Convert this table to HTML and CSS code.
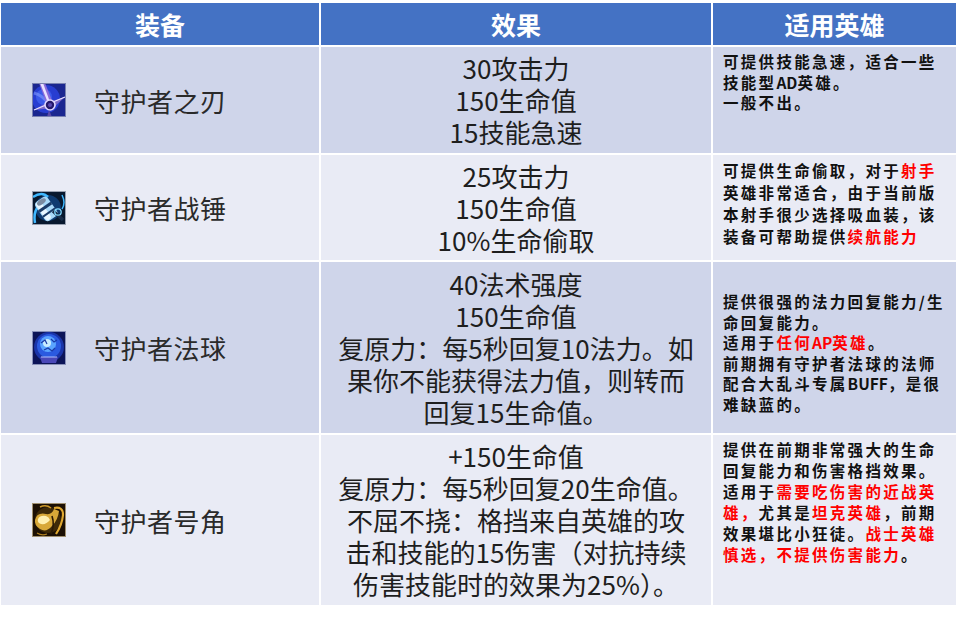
FILE: index.html
```html
<!DOCTYPE html>
<html lang="zh-CN">
<head>
<meta charset="utf-8">
<title>守护者装备</title>
<link rel="stylesheet" href="styles.css">
</head>
<body>
<div class="wrap">
  <div class="table">
    <div class="hd">装备</div>
    <div class="hd">效果</div>
    <div class="hd">适用英雄</div>

    <div class="cell item odd">
      <svg class="icon" viewBox="0 0 34 34">
        <rect width="34" height="34" fill="#1a2690"/>
        <circle cx="14" cy="16" r="14" fill="#2a40d8" opacity="0.9"/>
        <circle cx="12" cy="14" r="8" fill="#4060f0" opacity="0.8"/>
        <path d="M2 10 Q10 12 16 20" stroke="#90a8ff" stroke-width="3" fill="none" opacity="0.5"/>
        <path d="M7 0 L13 0 L21 20 L15 22 Z" fill="#8a6ad8"/>
        <path d="M8 0 L11 0 L18 19 L16 20 Z" fill="#e8e0ff"/>
        <path d="M2 27 L14 20 L33 14 L21 25 Z" fill="#7a68c8"/>
        <path d="M2 27 L33 14" stroke="#e8e0ff" stroke-width="1.2"/>
        <circle cx="18" cy="22" r="5" fill="#24186a" stroke="#e0d8ff" stroke-width="1.6"/>
        <circle cx="18" cy="22" r="2" fill="#5a48b0"/>
        <path d="M17 27 L20 34 L15 34 Z" fill="#5a4aa8"/>
        <rect x="0.5" y="0.5" width="33" height="33" fill="none" stroke="#7880b0" stroke-width="1"/>
      </svg>
      <span class="name">守护者之刃</span>
    </div>
    <div class="cell eff odd">30攻击力<br>150生命值<br>15技能急速</div>
    <div class="cell hero odd lh20">可提供技能急速，适合一些<br>技能型<span class="lat">AD</span>英雄。<br>一般不出。</div>

    <div class="cell item even">
      <svg class="icon" viewBox="0 0 34 34">
        <rect width="34" height="34" fill="#08182e"/>
        <circle cx="16" cy="17" r="13" fill="#0e3a70"/>
        <path d="M1 6 Q10 0 16 6" stroke="#40b8ff" stroke-width="2.5" fill="none"/>
        <path d="M3 32 Q1 20 7 15" stroke="#40b8ff" stroke-width="2.5" fill="none"/>
        <path d="M30 4 Q34 12 30 18" stroke="#40b8ff" stroke-width="1.5" fill="none"/>
        <g transform="rotate(-35 15 18)">
          <rect x="7" y="6" width="15" height="23" rx="4" fill="#a8d8f8"/>
          <rect x="8" y="7" width="6" height="21" rx="3" fill="#e8f6ff"/>
          <rect x="7" y="14" width="15" height="3" fill="#1a3a66"/>
          <rect x="7" y="21" width="15" height="2" fill="#1a3a66"/>
          <ellipse cx="14.5" cy="9" rx="5" ry="2.5" fill="#7a8aa0"/>
        </g>
        <path d="M21 20 L31 29" stroke="#1a2e4a" stroke-width="3.5"/>
        <circle cx="26" cy="21" r="3.2" fill="none" stroke="#80d8ff" stroke-width="1.3"/>
        <rect x="0.5" y="0.5" width="33" height="33" fill="none" stroke="#98a0b0" stroke-width="1"/>
      </svg>
      <span class="name">守护者战锤</span>
    </div>
    <div class="cell eff even">25攻击力<br>150生命值<br>10%生命偷取</div>
    <div class="cell hero even lh22">可提供生命偷取，对于<b class="red">射手</b><br>英雄非常适合，由于当前版<br>本射手很少选择吸血装，该<br>装备可帮助提供<b class="red">续航能力</b></div>

    <div class="cell item odd">
      <svg class="icon" viewBox="0 0 34 34">
        <rect width="34" height="34" fill="#0c1458"/>
        <circle cx="17" cy="16" r="15" fill="#1a34a8"/>
        <circle cx="17" cy="15" r="12" fill="#2a5ae0"/>
        <circle cx="16" cy="13" r="8" fill="#5aa4ff"/>
        <circle cx="15" cy="12" r="4" fill="#c8ecff"/>
        <path d="M9 12 L13 9 L15 13 M19 8 L22 11 L25 9 M12 19 L16 17 L20 20 L23 17" stroke="#1a3aa8" stroke-width="1.2" fill="none"/>
        <path d="M8 26 L26 26 L24 32 L10 32 Z" fill="#4a48b8"/>
        <path d="M9 26 L25 26" stroke="#b0c0ff" stroke-width="1"/>
        <rect x="0.5" y="0.5" width="33" height="33" fill="none" stroke="#8890b8" stroke-width="1"/>
      </svg>
      <span class="name">守护者法球</span>
    </div>
    <div class="cell eff odd">40法术强度<br>150生命值<br>复原力：每5秒回复10法力。如<br>果你不能获得法力值，则转而<br>回复15生命值。</div>
    <div class="cell hero odd pad3 lh20">提供很强的法力回复能力/生<br>命回复能力。<br>适用于<b class="red">任何<span class="lat">AP</span>英雄</b>。<br>前期拥有守护者法球的法师<br>配合大乱斗专属<span class="lat">BUFF</span>，是很<br>难缺蓝的。</div>

    <div class="cell item even">
      <svg class="icon" viewBox="0 0 34 34">
        <rect width="34" height="34" fill="#1c1004"/>
        <circle cx="16" cy="17" r="13" fill="#3e2a08"/>
        <path d="M3 17 Q5 9 14 11 Q20 12 22 6 L27 8 Q26 17 20 23 Q14 30 8 26 Q2 22 3 17 Z" fill="#d8a838"/>
        <path d="M6 16 Q8 12 14 13 Q17 14 18 17 Q14 22 9 21 Q5 20 6 16 Z" fill="#fff0b0"/>
        <path d="M22 5 Q31 3 31 12 Q30 22 24 31" stroke="#e0a830" stroke-width="2.2" fill="none"/>
        <path d="M20 13 Q23 22 19 31" stroke="#2a1a06" stroke-width="1.6" fill="none"/>
        <path d="M8 4 Q14 1 19 5" stroke="#d09a28" stroke-width="1.6" fill="none"/>
        <path d="M5 30 Q10 33 15 31" stroke="#b08020" stroke-width="1.2" fill="none"/>
        <rect x="0.5" y="0.5" width="33" height="33" fill="none" stroke="#a09070" stroke-width="1"/>
      </svg>
      <span class="name">守护者号角</span>
    </div>
    <div class="cell eff even">+150生命值<br>复原力：每5秒回复20生命值。<br>不屈不挠：格挡来自英雄的攻<br>击和技能的15伤害（对抗持续<br>伤害技能时的效果为25%）。</div>
    <div class="cell hero even lh21">提供在前期非常强大的生命<br>回复能力和伤害格挡效果。<br>适用于<b class="red">需要吃伤害的近战英</b><br><b class="red">雄，</b>尤其是<b class="red">坦克英雄</b>，前期<br>效果堪比小狂徒。<b class="red">战士英雄</b><br><b class="red">慎选，不提供伤害能力</b>。</div>
  </div>
</div>
</body>
</html>
```

FILE: styles.css
```css
html, body {
  margin: 0;
  padding: 0;
  background: #ffffff;
}

.wrap {
  padding: 3px 0 0 1px;
}

.table {
  display: grid;
  grid-template-columns: 318px 390px 243px;
  grid-template-rows: 42px 106px 105px 171px 170px;
  gap: 2px;
  font-family: "Noto Sans CJK SC", "Noto Sans", sans-serif;
}

.hd {
  background: #4472c4;
  color: #ffffff;
  font-weight: 700;
  font-size: 25px;
  display: flex;
  align-items: center;
  justify-content: center;
  line-height: 1;
}

.odd {
  background: #cfd5ea;
}

.even {
  background: #e9ebf5;
}

.item {
  display: flex;
  align-items: center;
  padding-left: 31px;
}

.icon {
  width: 34px;
  height: 34px;
  flex: none;
  display: block;
}

.name {
  margin-left: 28px;
  font-size: 26px;
  color: #2a2a2a;
  letter-spacing: 0.5px;
}

.eff {
  display: flex;
  align-items: center;
  justify-content: center;
  text-align: center;
  font-size: 26px;
  line-height: 32px;
  color: #1e1e1e;
  white-space: nowrap;
}

.hero {
  font-size: 15.5px;
  font-weight: 700;
  letter-spacing: 2.3px;
  padding: 4px 0 0 10px;
  white-space: nowrap;
  color: #111111;
}

.hero b {
  font-weight: 700;
}

.lat {
  letter-spacing: 0;
}

.lh20 { line-height: 20.5px; }
.lh21 { line-height: 21px; }
.lh22 { line-height: 22px; }

.pad3 {
  padding-top: 29px;
}

.red {
  color: #ff0000;
}
```
